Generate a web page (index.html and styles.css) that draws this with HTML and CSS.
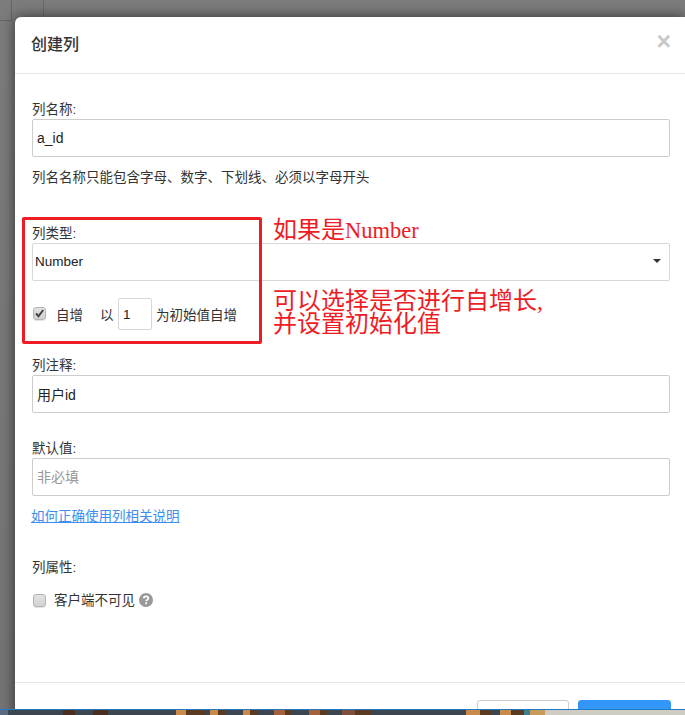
FILE: index.html
```html
<!DOCTYPE html>
<html lang="en">
<head>
    <meta charset="UTF-8">
    <meta name="viewport" content="width=device-width, initial-scale=1.0">
    <title>创建列</title>
    <link rel="stylesheet" href="styles.css">
</head>
<body>

<div class="backdrop">
    <div class="modal">
        <div class="modal-header">
            <h4>创建列</h4>
            <span class="close">×</span>
        </div>

        <div class="modal-body">
            <div class="field name-field">
                <label>列名称:</label>
                <input class="text-input" type="text" value="a_id">
                <p class="hint">列名名称只能包含字母、数字、下划线、必须以字母开头</p>
            </div>

            <div class="field type-field">
                <label>列类型:</label>
                <div class="select-box">
                    Number
                    <span class="caret"></span>
                </div>
                <div class="auto-row">
                    <span class="check">
                        <svg width="11" height="11" viewBox="0 0 11 11">
                            <path d="M2 5.5l2.5 2.6L9.2 2" fill="none" stroke="#444" stroke-width="2"/>
                        </svg>
                    </span>
                    <span class="auto-label">自增</span>
                    <span class="auto-from">以</span>
                    <input class="num-input" type="text" value="1">
                    <span>为初始值自增</span>
                </div>
            </div>

            <div class="field comment-field">
                <label>列注释:</label>
                <input class="text-input" type="text" value="用户id">
            </div>

            <div class="field default-field">
                <label>默认值:</label>
                <input class="text-input" type="text" placeholder="非必填">
            </div>

            <a class="help-link" href="#">如何正确使用列相关说明</a>

            <div class="attr-title">列属性:</div>
            <div class="attr-row">
                <span class="check"></span>
                <span class="attr-label">客户端不可见</span>
                <svg class="help-icon" width="14" height="14" viewBox="0 0 14 14">
                    <circle cx="7" cy="7" r="7" fill="#999"/>
                    <path d="M4.7 5.4C4.8 4 5.8 3.3 7 3.3c1.3 0 2.3.8 2.3 1.9 0 1-.6 1.4-1.2 1.8-.5.3-.8.6-.8 1.2" fill="none" stroke="#fff" stroke-width="1.7"/>
                    <rect x="6.2" y="9.4" width="1.8" height="1.8" fill="#fff"/>
                </svg>
            </div>
        </div>

        <div class="modal-footer">
            <button class="btn btn-cancel"></button>
            <button class="btn btn-primary"></button>
        </div>
    </div>

    <div class="note note-top">如果是<span class="note-latin">Number</span></div>
    <div class="note note-bottom">可以选择是否进行自增长,<br>并设置初始化值</div>
    <div class="red-box"></div>
</div>

<div class="taskbar"></div>

</body>
</html>
```

FILE: styles.css
```css
* {
    margin: 0;
    padding: 0;
    box-sizing: border-box;
}

html, body {
    height: 100%;
    overflow: hidden;
}

body {
    font-family: "Liberation Sans", "Noto Sans CJK SC", sans-serif;
    font-size: 13.5px;
    color: #333;
    background: #6b6b6b;
    display: flex;
    flex-direction: column;
}

.backdrop {
    flex: 1;
    min-height: 0;
    padding: 17px 0 0 15px;
    background:
        linear-gradient(#666, #666) 11px 0 / 1px 20px no-repeat,
        linear-gradient(#666, #666) 0 20px / 12px 1px no-repeat,
        linear-gradient(#6a6a6a, #6a6a6a) 43px 0 / 1px 17px no-repeat,
        linear-gradient(#7c7c7c, #747474);
    overflow: hidden;
}

/* Modal */
.modal {
    width: 670px;
    height: 700px;
    background: #fff;
    border-radius: 6px 0 0 0;
    box-shadow: 0 0 14px rgba(0, 0, 0, 0.6);
}

.modal-header {
    height: 57px;
    padding: 0 16px 4px;
    border-bottom: 1px solid #e5e5e5;
    display: flex;
    justify-content: space-between;
    align-items: center;
}

.modal-header h4 {
    font-size: 16px;
    font-weight: 500;
    color: #333;
}

.close {
    font-size: 25px;
    font-weight: 700;
    color: #c9c9c9;
    margin-right: -2px;
    margin-top: -3px;
}

.modal-body {
    height: 609px;
    padding: 26px 15px 0 17px;
    border-bottom: 1px solid #e5e5e5;
}

label {
    display: block;
    padding-top: 1px;
    line-height: 18px;
}

.text-input {
    display: block;
    width: 100%;
    height: 38px;
    padding: 0 4px 1px;
    border: 1px solid #ccc;
    border-radius: 2px;
    font-family: inherit;
    font-size: 14px;
    color: #222;
    outline: none;
}

.text-input::placeholder {
    color: #999;
}

.hint {
    margin-top: 12px;
    line-height: 18px;
}

.name-field {
    height: 124px;
}

.type-field {
    height: 132px;
}

.comment-field {
    height: 83px;
}

.default-field {
    height: 69px;
}

.select-box {
    height: 38px;
    line-height: 36px;
    padding: 0 2px;
    border: 1px solid #d8d8d8;
    border-radius: 2px;
    position: relative;
    color: #222;
}

.caret {
    position: absolute;
    right: 8px;
    top: 15px;
    border-top: 4px solid #333;
    border-left: 4px solid transparent;
    border-right: 4px solid transparent;
}

.auto-row {
    display: flex;
    align-items: center;
    margin-top: 16px;
    height: 34px;
}

.check {
    flex: none;
    width: 13px;
    height: 13px;
    margin-left: 1px;
    border: 1px solid #b4b4b4;
    border-radius: 3px;
    background: linear-gradient(#e2e2e2, #d2d2d2);
    box-shadow: 0 1px 1px rgba(0, 0, 0, 0.12);
}

.check svg {
    display: block;
}

.auto-row .check {
    margin-top: -2px;
}

.auto-label {
    margin-left: 10px;
}

.auto-from {
    margin-left: 17px;
}

.num-input {
    width: 34px;
    height: 32px;
    margin: 0 4px 0 4.5px;
    padding-left: 4px;
    border: 1px solid #d8d8d8;
    border-radius: 2px;
    font-family: inherit;
    font-size: 13.5px;
    color: #222;
}

.help-link {
    display: block;
    margin-left: -1px;
    color: #3d8ef0;
    line-height: 18px;
}

.attr-title {
    margin-top: 33px;
    line-height: 18px;
}

.attr-row {
    display: flex;
    align-items: center;
    margin-top: 14px;
    height: 18px;
}

.attr-label {
    margin-left: 8px;
    margin-bottom: 2px;
}

.help-icon {
    margin-left: 4px;
}

/* Footer, cut off by the bottom of the window */
.modal-footer {
    display: flex;
    justify-content: flex-end;
    gap: 9px;
    padding: 17px 14px 0 0;
}

.btn {
    width: 92px;
    height: 40px;
    border-radius: 3px;
    border: 1px solid #ccc;
    background: #fff;
}

.btn-primary {
    width: 93px;
    border-color: #3296fa;
    background: #3296fa;
}

/* Annotations pasted on the screenshot */
.red-box {
    position: absolute;
    left: 22px;
    top: 217px;
    width: 240px;
    height: 127px;
    border: 3px solid #ee1c25;
    border-radius: 2px;
}

.note {
    position: absolute;
    left: 273px;
    font-family: "Liberation Serif", "Noto Sans CJK SC", serif;
    font-size: 24px;
    color: #ee1c25;
    line-height: 23px;
}

.note-latin {
    font-size: 22.5px;
}

.note-top {
    top: 219px;
}

.note-bottom {
    top: 290px;
}

/* Strip of the desktop below the window */
.taskbar {
    height: 6px;
    flex: none;
    border-top: 1px solid #1f7cc4;
    background: linear-gradient(90deg,
        #5a6a80 0 8px,
        #3c4650 8px 63px,
        #4a2f20 63px 75px,
        #3c4650 75px 93px,
        #4a2f20 93px 108px,
        #3c4650 108px 176px,
        #c98a4a 176px 186px,
        #5a3a20 186px 205px,
        #3c4650 205px 210px,
        #c98a4a 210px 218px,
        #5a3a20 218px 225px,
        #3c4650 225px 243px,
        #c98a4a 243px 250px,
        #5a3a20 250px 258px,
        #3c4650 258px 274px,
        #a5603c 274px 285px,
        #5a3a20 285px 291px,
        #3c4650 291px 309px,
        #a5603c 309px 320px,
        #5a3a20 320px 327px,
        #3c4650 327px 342px,
        #7e4f3c 342px 355px,
        #5a3a20 355px 371px,
        #3c4650 371px 466px,
        #c98a4a 466px 480px,
        #5a3a20 480px 491px,
        #3c4650 491px 500px,
        #c98a4a 500px 511px,
        #5a3a20 511px 524px,
        #3f7f92 524px 530px,
        #c99a5a 530px 545px,
        #cfccc4 545px);
}
```
